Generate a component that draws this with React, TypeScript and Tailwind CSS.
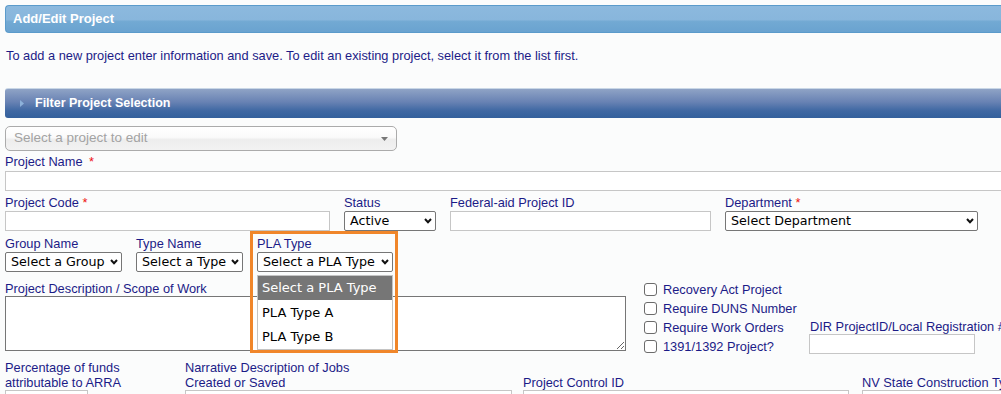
import React from 'react';

const label = 'block text-[12.8px] leading-[14px] text-[#1b1b87] whitespace-nowrap';
const input = 'h-[20px] border border-[#c6c6c6] bg-white';

function Chevron() {
  return (
    <svg width="8" height="6" viewBox="0 0 8 6" className="absolute right-[3px] top-[6px]">
      <polyline points="1,1 4,4.2 7,1" fill="none" stroke="#111" strokeWidth="2" />
    </svg>
  );
}

function Select({ text, className }: { text: string; className: string }) {
  return (
    <div
      className={`relative h-[20px] overflow-hidden rounded-[2px] border border-[#767676] bg-white pl-[5px] font-['DejaVu_Sans',sans-serif] text-[12.7px] leading-[18px] text-black whitespace-nowrap ${className}`}
    >
      {text}
      <Chevron />
    </div>
  );
}

function Check({ text }: { text: string }) {
  return (
    <div className="flex h-[19px] items-center">
      <span className="h-[13px] w-[13px] shrink-0 rounded-[3px] border border-[#6b6b6b] bg-white" />
      <span className="ml-[6px] text-[12.8px] leading-[14px] text-[#1b1b87] whitespace-nowrap">{text}</span>
    </div>
  );
}

export default function App() {
  return (
    <div className="relative h-[394px] w-[1001px] overflow-hidden bg-[#fbfcfc] font-['Liberation_Sans',Arial,sans-serif]">
      {/* page header */}
      <div className="ml-[5px] mt-[5px] h-[28px] rounded-l-[4px] border border-r-0 border-[#5b9bcb] bg-[linear-gradient(#8cb9de_0%,#88b6dc_52%,#72a9d3_60%,#6aa3d0_100%)] pl-[7px] text-[13px] font-bold leading-[26px] text-white">
        Add/Edit Project
      </div>

      <p className="ml-[6px] mt-[16px] text-[12.8px] leading-[14px] text-[#1b1b87]">
        To add a new project enter information and save. To edit an existing project, select it from the list first.
      </p>

      {/* filter bar */}
      <div className="ml-[5px] mt-[25px] flex h-[30px] items-center rounded-l-[3px] border-t border-[#c9d7e6] bg-[linear-gradient(#8fa3c6_0%,#6882b3_45%,#3f68a3_75%,#33609c_100%)] pl-[15px] text-[12.5px] font-bold text-white">
        <svg width="4" height="7" viewBox="0 0 4 7">
          <polygon points="0,0 4,3.5 0,7" fill="#8db1da" />
        </svg>
        <span className="ml-[11px]">Filter Project Selection</span>
      </div>

      {/* project picker */}
      <div className="ml-[5px] mt-[8px] flex h-[25px] w-[392px] items-center justify-between rounded-[5px] border border-[#ababab] bg-[linear-gradient(#ffffff_0%,#fafafa_45%,#ededed_55%,#f2f2f2_100%)] pl-[8px] pr-[8px] text-[13.5px] text-[#a3a3a3]">
        <span>Select a project to edit</span>
        <svg width="7" height="4" viewBox="0 0 7 4">
          <polygon points="0,0 7,0 3.5,4" fill="#777" />
        </svg>
      </div>

      {/* project name */}
      <div className="mt-[4px] pl-[5px]">
        <span className={label}>
          Project Name <span className="ml-[3px] text-[#ee1111]">*</span>
        </span>
        <div className={`${input} mt-[2px] w-[1100px]`} />
      </div>

      {/* code / status / federal / department */}
      <div className="mt-[5px] flex pl-[5px]">
        <div className="w-[325px] shrink-0">
          <span className={label}>
            Project Code <span className="text-[#ee1111]">*</span>
          </span>
          <div className={`${input} mt-[1px]`} />
        </div>
        <div className="ml-[14px] w-[92px] shrink-0">
          <span className={label}>Status</span>
          <Select text="Active" className="mt-[1px]" />
        </div>
        <div className="ml-[14px] w-[261px] shrink-0">
          <span className={label}>Federal-aid Project ID</span>
          <div className={`${input} mt-[1px]`} />
        </div>
        <div className="ml-[14px] w-[253px] shrink-0">
          <span className={label}>
            Department <span className="text-[#ee1111]">*</span>
          </span>
          <Select text="Select Department" className="mt-[1px]" />
        </div>
      </div>

      {/* group / type / PLA */}
      <div className="mt-[6px] flex pl-[5px]">
        <div className="w-[117px] shrink-0">
          <span className={label}>Group Name</span>
          <Select text="Select a Group" className="mt-[1px]" />
        </div>
        <div className="ml-[14px] w-[107px] shrink-0">
          <span className={label}>Type Name</span>
          <Select text="Select a Type" className="mt-[1px]" />
        </div>
        <div className="ml-[14px] w-[136px] shrink-0">
          <span className={label}>PLA Type</span>
          <Select text="Select a PLA Type" className="mt-[1px]" />
        </div>
      </div>

      {/* description + flags */}
      <div className="mt-[8px] flex pl-[5px]">
        <div className="w-[621px] shrink-0 pt-[2px]">
          <span className={label}>Project Description / Scope of Work</span>
          <textarea
            readOnly
            className="block h-[55px] w-[621px] resize border border-[#767676] bg-white"
          />
        </div>
        <div className="ml-[18px] w-[165px] shrink-0">
          <Check text="Recovery Act Project" />
          <Check text="Require DUNS Number" />
          <Check text="Require Work Orders" />
          <Check text="1391/1392 Project?" />
        </div>
        <div className="shrink-0 pt-[40px]">
          <span className={`${label} pl-[1px]`}>DIR ProjectID/Local Registration #</span>
          <div className={`${input} w-[166px]`} />
        </div>
      </div>

      {/* bottom row */}
      <div className="mt-[4px] flex pl-[5px]">
        <div className="w-[180px] shrink-0">
          <div className="text-[12.8px] leading-[15px] text-[#1b1b87]">
            Percentage of funds
            <br />
            attributable to ARRA
          </div>
          <div className={`${input} w-[83px]`} />
        </div>
        <div className="w-[338px] shrink-0">
          <div className="text-[12.8px] leading-[15px] text-[#1b1b87]">
            Narrative Description of Jobs
            <br />
            Created or Saved
          </div>
          <div className={`${input} w-[327px]`} />
        </div>
        <div className="w-[339px] shrink-0">
          <div className="pt-[15px] text-[12.8px] leading-[15px] text-[#1b1b87]">Project Control ID</div>
          <div className={`${input} w-[326px]`} />
        </div>
        <div className="w-[200px] shrink-0">
          <div className="pt-[15px] text-[12.8px] leading-[15px] text-[#1b1b87] whitespace-nowrap">NV State Construction Type</div>
          <div className={`${input} w-[200px] border-[#767676]`} />
        </div>
      </div>

      {/* open PLA Type list */}
      <div className="absolute left-[257px] top-[275px] w-[136px] border border-[#c4c4c4] bg-white font-['DejaVu_Sans',sans-serif] text-[13px] text-black">
        <div className="h-[24px] bg-[#767676] pl-[4px] leading-[24px] text-white">Select a PLA Type</div>
        <div className="h-[25px] pl-[4px] leading-[25px]">PLA Type A</div>
        <div className="h-[24px] pl-[4px] leading-[24px]">PLA Type B</div>
      </div>

      {/* highlight annotation */}
      <div className="pointer-events-none absolute left-[250px] top-[231px] h-[122px] w-[148px] border-[3px] border-[#f0862a]" />
    </div>
  );
}
